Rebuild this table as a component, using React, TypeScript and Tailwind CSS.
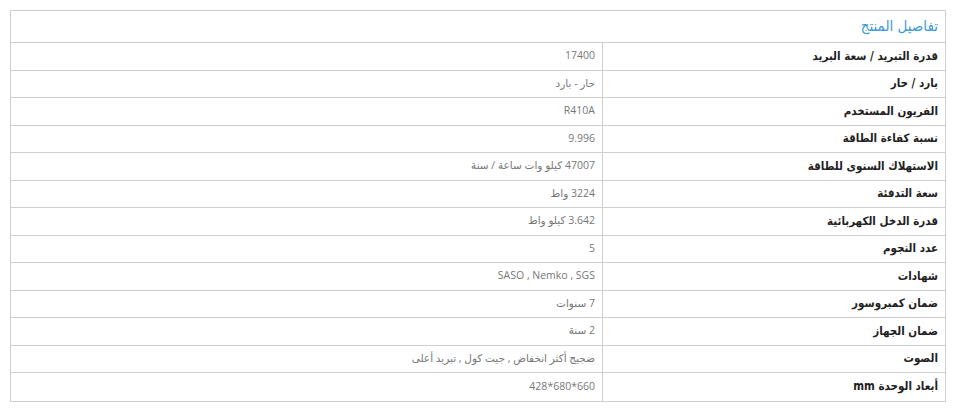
const rows: [string, string][] = [
  ['قدرة التبريد / سعة البريد', '17400'],
  ['بارد / حار', 'حار - بارد'],
  ['الفريون المستخدم', 'R410A'],
  ['نسبة كفاءة الطاقة', '9.996'],
  ['الاستهلاك السنوى للطاقة', '47007 كيلو وات ساعة / سنة'],
  ['سعة التدفئة', '3224 واط'],
  ['قدرة الدخل الكهربائية', '3.642 كيلو واط'],
  ['عدد النجوم', '5'],
  ['شهادات', 'SASO , Nemko , SGS'],
  ['ضمان كمبروسور', '7 سنوات'],
  ['ضمان الجهاز', '2 سنة'],
  ['الصوت', 'ضجيج أكثر انخفاض , جيت كول , تبريد أعلى'],
  ['أبعاد الوحدة mm', '660*680*428'],
];

export default function App() {
  return (
    <div className="bg-white w-[960px] h-[416px] pt-[10px] pl-[10px]">
      <div dir="rtl" className="w-[936px] border border-[#cfcfcf] bg-white">
        <div className="h-[32px] border-b border-[#cfcfcf] px-[7px] flex items-center text-[15px] text-[#3b9ad6] font-['DejaVu_Sans_Condensed','DejaVu_Sans',sans-serif]">
          تفاصيل المنتج
        </div>
        {rows.map(([label, value], i) => (
          <div
            key={i}
            className={`grid grid-cols-[343px_1fr] h-[27.5px] ${
              i < rows.length - 1 ? 'border-b border-[#cfcfcf]' : ''
            }`}
          >
            <div className="border-l border-[#cfcfcf] px-[7px] flex items-center text-[11.5px] font-bold text-[#222] font-['DejaVu_Sans_Condensed','DejaVu_Sans',sans-serif]">
              {label}
            </div>
            <div className="px-[7px] flex items-center text-[10.5px] text-[#777] font-['Open_Sans','DejaVu_Sans',sans-serif]">
              {value}
            </div>
          </div>
        ))}
      </div>
    </div>
  );
}
